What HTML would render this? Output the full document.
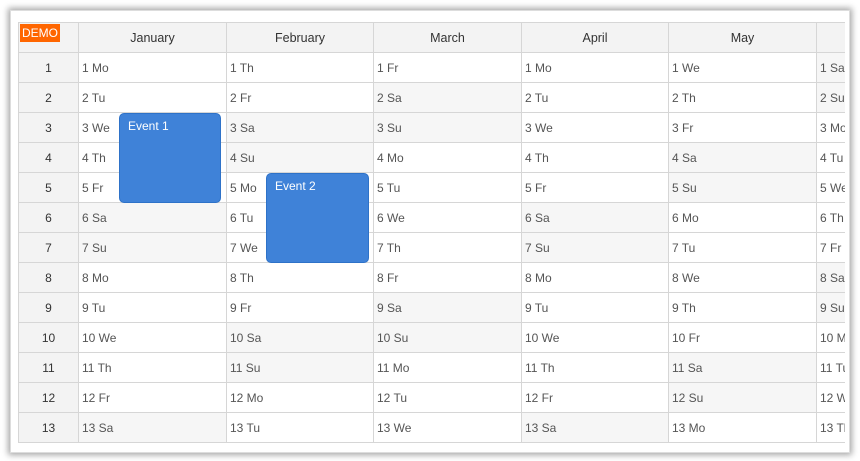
<!DOCTYPE html>
<html><head><meta charset="utf-8"><style>
body{margin:0;width:860px;height:461px;background:#fff;position:relative;overflow:hidden;font-family:"Liberation Sans",sans-serif}
.frame{position:absolute;left:10px;top:10px;width:838px;height:441px;background:#fff;box-shadow:0 0 6px 2px rgba(0,0,0,.35);border:1px solid #ddd}
.clip{position:absolute;left:18px;top:22px;width:827px;height:421px;overflow:hidden}
table{border-collapse:collapse;table-layout:fixed;width:948px;font-size:12px;color:#555}
td,th{border:1px solid #d6d6d6;height:29px;padding:0 0 0 3px;white-space:nowrap;overflow:hidden}
th{background:#f3f3f3;font-weight:normal;text-align:center;color:#333;padding:0;font-size:12.5px}
td.h{background:#f3f3f3;text-align:center;color:#333;padding:0}
td.w{background:#f6f6f6}
.demo{position:absolute;left:20px;top:24px;background:#f60;color:#fff;font-size:12px;padding:2px 2px;line-height:14px}
.ev{position:absolute;background:#3f82d8;border:1px solid #2e72c8;border-radius:5px;color:#fff;font-size:12px;padding:5px 0 0 8px;box-sizing:border-box}
</style></head><body>
<div class="frame"></div>
<div class="clip">
<table>
<colgroup><col style="width:60px"><col style="width:148px"><col style="width:147px"><col style="width:148px"><col style="width:147px"><col style="width:148px"><col style="width:150px"></colgroup>
<tr><th></th><th>January</th><th>February</th><th>March</th><th>April</th><th>May</th><th></th></tr>
<tr><td class="h">1</td><td>1 Mo</td><td>1 Th</td><td>1 Fr</td><td>1 Mo</td><td>1 We</td><td class="w">1 Sa</td></tr>
<tr><td class="h">2</td><td>2 Tu</td><td>2 Fr</td><td class="w">2 Sa</td><td>2 Tu</td><td>2 Th</td><td class="w">2 Su</td></tr>
<tr><td class="h">3</td><td>3 We</td><td class="w">3 Sa</td><td class="w">3 Su</td><td>3 We</td><td>3 Fr</td><td>3 Mo</td></tr>
<tr><td class="h">4</td><td>4 Th</td><td class="w">4 Su</td><td>4 Mo</td><td>4 Th</td><td class="w">4 Sa</td><td>4 Tu</td></tr>
<tr><td class="h">5</td><td>5 Fr</td><td>5 Mo</td><td>5 Tu</td><td>5 Fr</td><td class="w">5 Su</td><td>5 We</td></tr>
<tr><td class="h">6</td><td class="w">6 Sa</td><td>6 Tu</td><td>6 We</td><td class="w">6 Sa</td><td>6 Mo</td><td>6 Th</td></tr>
<tr><td class="h">7</td><td class="w">7 Su</td><td>7 We</td><td>7 Th</td><td class="w">7 Su</td><td>7 Tu</td><td>7 Fr</td></tr>
<tr><td class="h">8</td><td>8 Mo</td><td>8 Th</td><td>8 Fr</td><td>8 Mo</td><td>8 We</td><td class="w">8 Sa</td></tr>
<tr><td class="h">9</td><td>9 Tu</td><td>9 Fr</td><td class="w">9 Sa</td><td>9 Tu</td><td>9 Th</td><td class="w">9 Su</td></tr>
<tr><td class="h">10</td><td>10 We</td><td class="w">10 Sa</td><td class="w">10 Su</td><td>10 We</td><td>10 Fr</td><td>10 Mo</td></tr>
<tr><td class="h">11</td><td>11 Th</td><td class="w">11 Su</td><td>11 Mo</td><td>11 Th</td><td class="w">11 Sa</td><td>11 Tu</td></tr>
<tr><td class="h">12</td><td>12 Fr</td><td>12 Mo</td><td>12 Tu</td><td>12 Fr</td><td class="w">12 Su</td><td>12 We</td></tr>
<tr><td class="h">13</td><td class="w">13 Sa</td><td>13 Tu</td><td>13 We</td><td class="w">13 Sa</td><td>13 Mo</td><td>13 Th</td></tr>
<tr><td class="h">14</td><td class="w">14 Su</td><td>14 We</td><td>14 Th</td><td class="w">14 Su</td><td>14 Tu</td><td>14 Fr</td></tr>
</table>
</div>
<div class="demo">DEMO</div>
<div class="ev" style="left:119px;top:113px;width:102px;height:90px">Event 1</div>
<div class="ev" style="left:266px;top:173px;width:103px;height:90px">Event 2</div>
</body></html>
